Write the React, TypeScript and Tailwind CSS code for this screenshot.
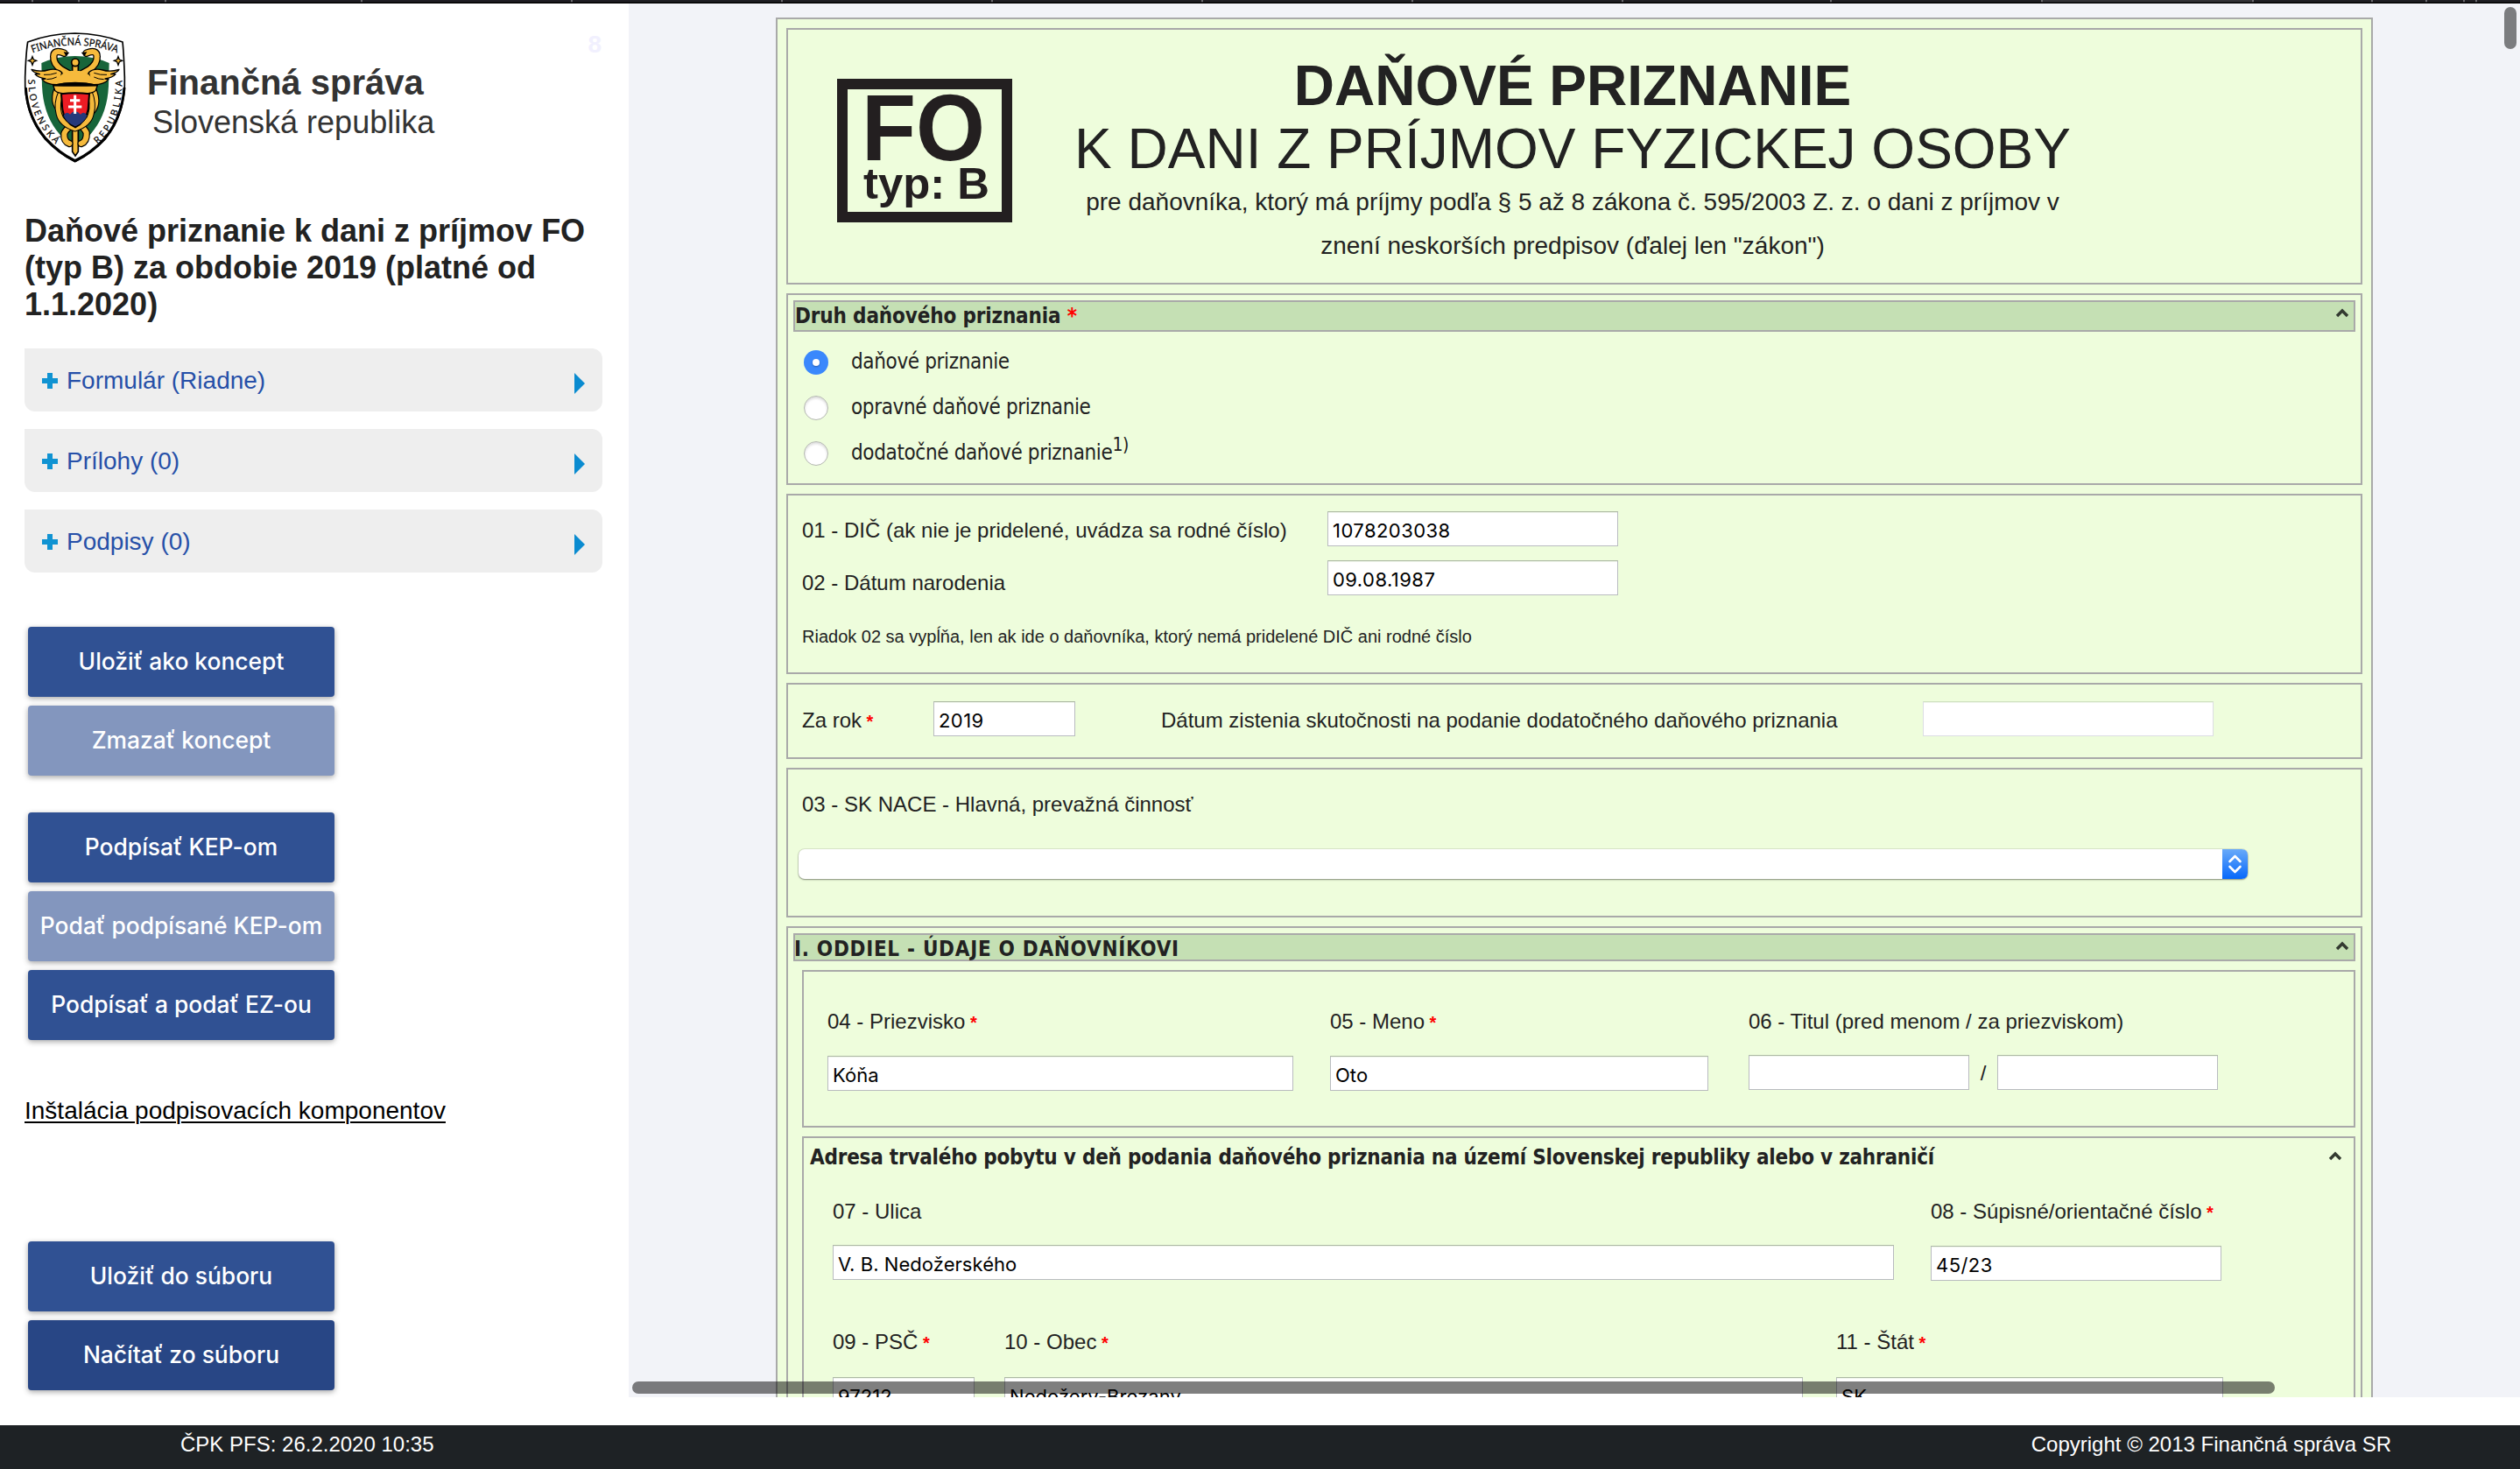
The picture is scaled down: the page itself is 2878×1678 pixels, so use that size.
import React from 'react';

const ticks = [37, 90, 189, 413, 653, 893, 1133, 1373, 1613, 1853, 2091, 2332, 2573, 2709, 2771, 2814, 2828];

function TopStrip() {
  return (
    <svg className="block h-1 w-full shrink-0" viewBox="0 0 2878 4" preserveAspectRatio="none">
      <rect width="2878" height="4" fill="#1f1e23" />
      <rect x="2332" width="241" height="4" fill="#333237" />
      {ticks.map((x) => (
        <rect key={x} x={x - 1} width="2" height="2.5" fill="#6a696e" />
      ))}
      <rect y="2.5" width="2878" height="1.5" fill="#000" />
    </svg>
  );
}

function Shield() {
  const gold = '#f6ba3c';
  return (
    <svg className="h-[165px] w-[130px] shrink-0" viewBox="0 0 390 495" fill="none">
      <path
        d="M35 54Q110 25 197 24Q285 25 360 54Q364 90 367 175Q371 300 302 385Q255 436 197 464Q140 436 93 385Q22 300 26 175Q29 90 35 54Z"
        fill="#fff"
        stroke="#000"
        strokeWidth="5"
      />
      <path d="M28 210Q34 310 95 383Q142 434 197 461Q253 434 300 383Q359 310 366 210" stroke="#000" strokeWidth="9" />
      <path
        d="M82 126Q137 102 197 102Q258 102 314 126L312 205Q308 295 262 355Q235 395 197 408Q160 395 132 355Q88 295 84 205Z"
        fill="#17653a"
      />
      <path id="arcTop" d="M52 92Q190 38 344 92" />
      <path id="arcLeft" d="M37 182C38 285 72 348 140 414" />
      <path id="arcRight" d="M274 404C330 356 362 280 358 172" />
      <g fill="#000" stroke="#000" strokeWidth="0.6" fontFamily="Noto Sans, sans-serif">
        <text fontSize="36" textLength="296" lengthAdjust="spacingAndGlyphs">
          <textPath href="#arcTop">FINANČNÁ SPRÁVA</textPath>
        </text>
        <text fontSize="32" textLength="248" lengthAdjust="spacing">
          <textPath href="#arcLeft">SLOVENSKÁ</textPath>
        </text>
        <text fontSize="32" textLength="242" lengthAdjust="spacing">
          <textPath href="#arcRight">REPUBLIKA</textPath>
        </text>
      </g>
      <path d="M51 104l4 10 10 4-10 4-4 11-4-11-10-4 10-4zM345 104l4 10 10 4-10 4-4 11-4-11-10-4 10-4z" fill={gold} stroke="#000" strokeWidth="4" />
      {/* staff */}
      <path d="M188 130h20v300l-10 14-10-14z" fill={gold} stroke="#000" strokeWidth="5" />
      {/* lower coils */}
      <g strokeLinecap="round">
        <path d="M136 215Q116 270 160 295Q230 345 236 365Q238 395 218 402" stroke="#000" strokeWidth="25" />
        <path d="M136 215Q116 270 160 295Q230 345 236 365Q238 395 218 402" stroke={gold} strokeWidth="18" />
        <path d="M258 215Q282 270 246 300Q166 345 160 368Q158 395 178 402" stroke="#000" strokeWidth="25" />
        <path d="M258 215Q282 270 246 300Q166 345 160 368Q158 395 178 402" stroke={gold} strokeWidth="18" />
        <path d="M150 225Q132 265 142 300Q150 335 197 350Q245 335 252 300Q262 265 246 225" stroke="#000" strokeWidth="22" />
        <path d="M150 225Q132 265 142 300Q150 335 197 350Q245 335 252 300Q262 265 246 225" stroke={gold} strokeWidth="16" />
        {/* snake necks */}
        <path d="M160 92Q124 78 124 104Q122 128 150 148L186 168" stroke="#000" strokeWidth="26" />
        <path d="M160 92Q124 78 124 104Q122 128 150 148L186 168" stroke={gold} strokeWidth="18" />
        <path d="M236 92Q272 78 272 104Q274 128 246 148L210 168" stroke="#000" strokeWidth="26" />
        <path d="M236 92Q272 78 272 104Q274 128 246 148L210 168" stroke={gold} strokeWidth="18" />
      </g>
      <path d="M158 88l20 2-12 12zM238 88l-20 2 12 12z" fill="#000" />
      {/* wings */}
      <path
        d="M142 200Q100 202 84 182L96 180Q70 176 60 164L76 164Q52 158 48 148Q80 158 104 150Q134 142 152 158ZM254 200Q296 202 312 182L300 180Q326 176 336 164L320 164Q344 158 348 148Q316 158 292 150Q262 142 244 158Z"
        fill={gold}
        stroke="#000"
        strokeWidth="4"
        strokeLinejoin="round"
      />
      <path d="M90 166Q112 168 134 160M100 182Q118 182 134 174M306 166Q284 168 262 160M296 182Q278 182 262 174" stroke="#000" strokeWidth="3" />
      {/* helmet */}
      <circle cx="198" cy="124" r="13" fill={gold} stroke="#000" strokeWidth="5" />
      <path d="M134 205Q136 152 197 152Q258 152 262 205Z" fill={gold} />
      <path d="M122 202Q197 184 274 202L268 220Q255 234 197 230Q140 234 128 220Z" fill={gold} stroke="#000" strokeWidth="4" />
      <path d="M122 203Q197 186 274 203Q197 204 122 203Z" fill="#000" stroke="#000" strokeWidth="5" />
      <path d="M150 232Q197 226 246 232L242 285Q234 328 198 346Q160 328 154 285Z" fill="#ed1c24" stroke="#000" strokeWidth="6" />
      <path d="M158 306Q168 288 180 302Q197 282 216 302Q228 288 238 306Q228 332 198 343Q168 332 158 306Z" fill="#26397b" />
      <path d="M197 236v64M180 254h34M174 276h46" stroke="#fff" strokeWidth="9" />
    </svg>
  );
}

function MenuItem({ label }: { label: string }) {
  return (
    <div className="flex h-[72px] w-[660px] items-center rounded-xl rounded-tl-none bg-[#eeeeee] px-5">
      <svg className="mt-[2px] h-[18px] w-[18px]" viewBox="0 0 18 18">
        <path d="M6 0h6v6h6v6h-6v6h-6v-6h-6v-6h6z" fill="#1093d2" />
      </svg>
      <span className="mt-px ml-[10px] text-[28px] text-[#2650a8]">{label}</span>
      <svg className="mt-2 ml-auto h-6 w-3" viewBox="0 0 12 24">
        <path d="M0 0L12 12L0 24z" fill="#0a8bd0" />
      </svg>
    </div>
  );
}

function ActionButton({ label, tone = 'bg-[#305193]' }: { label: string; tone?: string }) {
  return (
    <button
      className={`${tone} flex h-20 w-[350px] items-center justify-center rounded-[4px] font-[Inter,sans-serif] text-[26.4px] font-medium whitespace-nowrap text-white shadow-[0_2px_6px_rgba(0,0,0,0.35)]`}
    >
      {label}
    </button>
  );
}

function Star() {
  return <span className="text-[20px] font-bold text-[#ff0000]"> *</span>;
}

function TextBox({ value = '', width, faint = false, digits = false }: { value?: string; width: string; faint?: boolean; digits?: boolean }) {
  return (
    <div
      className={`${width} ${faint ? 'border-[#dcdde4] border-t-[#cfe0c0]' : 'border-[#b9bbc0] border-t-[#adb9a3]'} ${
        digits ? 'tracking-[0.45px]' : 'tracking-[0.05px]'
      } flex h-10 shrink-0 items-center border bg-white pt-1 pl-[5px] font-[Inter,sans-serif] text-[22px] whitespace-nowrap text-black shadow-[inset_0_1px_0_#f0f5ec]`}
    >
      {value}
    </div>
  );
}

function Field({ label, required = false, gap, children }: { label: string; required?: boolean; gap: string; children: React.ReactNode }) {
  return (
    <div className={`${gap} flex shrink-0 flex-col`}>
      <div className="text-[24px] leading-10 whitespace-pre">
        {label}
        {required && <Star />}
      </div>
      {children}
    </div>
  );
}

function Chevron({ place }: { place: string }) {
  return (
    <svg className={`${place} h-[11px] w-4 shrink-0`} viewBox="0 0 16 11" fill="none">
      <path d="M2 9L8 3L14 9" stroke="#333a30" strokeWidth="3.4" />
    </svg>
  );
}

function Radio({ checked = false, children }: { checked?: boolean; children: React.ReactNode }) {
  return (
    <label className="flex h-[52px] items-center">
      {checked ? (
        <span className="flex size-7 items-center justify-center rounded-full bg-[#3a88fc]">
          <span className="size-2 rounded-full bg-white shadow-[0_1px_2px_rgba(0,0,0,0.3)]" />
        </span>
      ) : (
        <span className="size-7 rounded-full border border-[#b4b8b0] bg-white shadow-[inset_0_2px_3px_rgba(0,0,0,0.15)]" />
      )}
      <span className="-mt-[3px] ml-[26px] font-['DejaVu_Sans_Condensed',sans-serif] text-[24px] leading-7 tracking-[-0.36px]">{children}</span>
    </label>
  );
}

const titleFont = "font-['DejaVu_Sans_Condensed',sans-serif] text-[24px] font-bold whitespace-pre";

export default function App() {
  return (
    <div className="flex h-[1678px] w-[2878px] flex-col overflow-hidden bg-white font-['Liberation_Sans',Arial,sans-serif] text-[#222222]">
      <TopStrip />
      <main className="flex h-[1592px] shrink-0">
        <aside className="flex w-[718px] shrink-0 flex-col bg-white pl-7">
          <header className="mt-[26px] flex">
            <div className="-ml-2">
              <Shield />
            </div>
            <div className="mt-[42px] ml-[18px] text-[#333333]">
              <h1 className="text-[40px] leading-[44px] font-bold">Finančná správa</h1>
              <p className="mt-1 ml-[6px] text-[36px] leading-10">Slovenská republika</p>
            </div>
            <span className="mt-[7px] mr-[31px] ml-auto text-[28px] leading-7 font-bold text-[#f1f0fe]">8</span>
          </header>
          <h2 className="mt-12 text-[36px] leading-[42px] font-bold">
            Daňové priznanie k dani z príjmov FO
            <br />
            (typ B) za obdobie 2019 (platné od
            <br />
            1.1.2020)
          </h2>
          <nav className="mt-[29px] flex flex-col gap-5">
            <MenuItem label="Formulár (Riadne)" />
            <MenuItem label="Prílohy (0)" />
            <MenuItem label="Podpisy (0)" />
          </nav>
          <div className="mt-[62px] ml-1 flex flex-col gap-[10px]">
            <ActionButton label="Uložiť ako koncept" />
            <ActionButton label="Zmazať koncept" tone="bg-[#8396be]" />
          </div>
          <div className="mt-[42px] ml-1 flex flex-col gap-[10px]">
            <ActionButton label="Podpísať KEP-om" />
            <ActionButton label="Podať podpísané KEP-om" tone="bg-[#8396be]" />
            <ActionButton label="Podpísať a podať EZ-ou" />
          </div>
          <a className="mt-[61px] self-start text-[28px] leading-10 text-black underline decoration-[1.5px] underline-offset-[3px]">
            Inštalácia podpisovacích komponentov
          </a>
          <div className="mt-[129px] ml-1 flex flex-col gap-[10px]">
            <ActionButton label="Uložiť do súboru" />
            <ActionButton label="Načítať zo súboru" tone="bg-[#284685]" />
          </div>
        </aside>

        <section className="relative flex-1 overflow-hidden bg-[#f2f3f8] pl-[168px]">
          <div className="mt-4 h-[1700px] w-[1824px] border-2 border-[#a9a9a9] bg-[#eefddc] p-[10px]">
            <div className="flex h-[293px] border-2 border-[#a9a9a9]">
              <svg className="mt-14 ml-14 h-[164px] w-[200px] shrink-0" viewBox="0 0 200 164" fontFamily="'Liberation Sans', Arial, sans-serif" fontWeight="bold">
                <rect x="6" y="6" width="188" height="152" fill="none" stroke="#231f20" strokeWidth="12" />
                <text x="28" y="93" fontSize="107" textLength="141" lengthAdjust="spacingAndGlyphs" fill="#231f20">
                  FO
                </text>
                <text x="30" y="137" fontSize="50.500" textLength="144" lengthAdjust="spacingAndGlyphs" fill="#231f20">
                  typ: B
                </text>
              </svg>
              <div className="mt-7 ml-[13px] w-[1254px] text-center whitespace-nowrap">
                <h1 className="text-[64px] leading-[72px] font-bold">DAŇOVÉ PRIZNANIE</h1>
                <h2 className="text-[64px] leading-[72px]">K DANI Z PRÍJMOV FYZICKEJ OSOBY</h2>
                <p className="text-[28px] leading-[50px]">
                  pre daňovníka, ktorý má príjmy podľa § 5 až 8 zákona č. 595/2003 Z. z. o dani z príjmov v
                  <br />
                  znení neskorších predpisov (ďalej len "zákon")
                </p>
              </div>
            </div>

            <div className="mt-[10px] h-[219px] border-2 border-[#a9a9a9] p-[6px]">
              <div className="flex h-9 items-center border-2 border-[#a9a9a9] bg-[#c5e0b4]">
                <span className={`${titleFont} tracking-[-0.15px]`}>
                  Druh daňového priznania <span className="text-[#ff0000]">*</span>
                </span>
                <Chevron place="mr-[5px] -mt-[7px] ml-auto" />
              </div>
              <div className="mt-[9px] pl-3">
                <Radio checked>daňové priznanie</Radio>
                <Radio>opravné daňové priznanie</Radio>
                <Radio>
                  dodatočné daňové priznanie
                  <sup className="-top-[10px] text-[21px] leading-none">1)</sup>
                </Radio>
              </div>
            </div>

            <div className="mt-[10px] h-[206px] border-2 border-[#a9a9a9] pt-[18px] pl-4">
              <div className="flex items-center">
                <span className="mt-1 w-[600px] text-[24px]">01 - DIČ (ak nie je pridelené, uvádza sa rodné číslo)</span>
                <TextBox width="w-[332px]" value="1078203038" digits />
              </div>
              <div className="mt-4 flex h-10 items-center">
                <span className="mt-3 w-[600px] text-[24px]">02 - Dátum narodenia</span>
                <TextBox width="w-[332px]" value="09.08.1987" digits />
              </div>
              <p className="mt-8 text-[20px] leading-[30px]">Riadok 02 sa vypĺňa, len ak ide o daňovníka, ktorý nemá pridelené DIČ ani rodné číslo</p>
            </div>

            <div className="mt-[10px] flex h-[87px] items-start border-2 border-[#a9a9a9] pt-[19px] pl-4">
              <span className="mt-[2px] w-[150px] text-[24px] leading-10 whitespace-pre">
                Za rok
                <Star />
              </span>
              <TextBox width="w-[162px]" value="2019" digits />
              <span className="mt-[2px] ml-[98px] w-[870px] text-[24px] leading-10">Dátum zistenia skutočnosti na podanie dodatočného daňového priznania</span>
              <TextBox width="w-[332px]" faint />
            </div>

            <div className="mt-[10px] h-[171px] border-2 border-[#a9a9a9] pt-5 pl-4">
              <p className="text-[24px] leading-10">03 - SK NACE - Hlavná, prevažná činnosť</p>
              <div className="mt-[31px] -ml-1 flex h-[34px] w-[1655px] justify-end rounded-[7px] bg-white shadow-[0_0_0_1px_rgba(0,0,0,0.08),0_1px_2px_rgba(0,0,0,0.4)]">
                <svg className="h-[34px] w-[29px]" viewBox="0 0 29 34" fill="none">
                  <defs>
                    <linearGradient id="blue" x1="0" y1="0" x2="0" y2="1">
                      <stop offset="0" stopColor="#69aaf9" />
                      <stop offset="1" stopColor="#0668fb" />
                    </linearGradient>
                  </defs>
                  <path d="M0 0H22Q29 0 29 7V27Q29 34 22 34H0Z" fill="url(#blue)" />
                  <path d="M8.500 14L14.500 8L20.500 14M8.500 20L14.500 26L20.500 20" stroke="#fff" strokeWidth="2.600" strokeLinecap="round" strokeLinejoin="round" />
                </svg>
              </div>
            </div>

            <div className="mt-[10px] h-[900px] border-2 border-[#a9a9a9] p-[6px]">
              <div className="flex h-8 items-center border-2 border-[#a9a9a9] bg-[#c5e0b4]">
                <span className={`${titleFont} mt-1 -ml-px tracking-[0.7px]`}>I. ODDIEL - ÚDAJE O DAŇOVNÍKOVI</span>
                <Chevron place="mr-[5px] -mt-[3px] ml-auto" />
              </div>

              <div className="mt-[10px] ml-[10px] flex h-[180px] border-2 border-[#a9a9a9] pt-[37px] pl-[27px]">
                <Field label="04 - Priezvisko" required gap="gap-[18px]">
                  <TextBox width="w-[532px]" value="Kóňa" />
                </Field>
                <div className="w-[42px]" />
                <Field label="05 - Meno" required gap="gap-[18px]">
                  <TextBox width="w-[432px]" value="Oto" />
                </Field>
                <div className="w-[46px]" />
                <Field label="06 - Titul (pred menom / za priezviskom)" gap="gap-[18px]">
                  <div className="flex">
                    <TextBox width="w-[252px]" />
                    <span className="w-8 text-center text-[24px] leading-[42px]">/</span>
                    <TextBox width="w-[252px]" />
                  </div>
                </Field>
              </div>

              <div className="mt-[10px] ml-[10px] h-[600px] border-2 border-[#a9a9a9] pt-1">
                <div className="flex h-9 items-center">
                  <span className={`${titleFont} ml-[7px] tracking-[-0.22px]`}>
                    Adresa trvalého pobytu v deň podania daňového priznania na území Slovenskej republiky alebo v zahraničí
                  </span>
                  <Chevron place="mr-[13px] -mt-1 ml-auto" />
                </div>
                <div className="mt-6 flex gap-[42px] pl-[33px]">
                  <Field label="07 - Ulica" gap="gap-[18px]">
                    <TextBox width="w-[1212px]" value="V. B. Nedožerského" />
                  </Field>
                  <Field label="08 - Súpisné/orientačné číslo" required gap="gap-[18px]">
                    <TextBox width="w-[332px]" value="45/23" digits />
                  </Field>
                </div>
                <div className="mt-[50px] flex pl-[33px]">
                  <Field label="09 - PSČ" required gap="gap-[19px]">
                    <TextBox width="w-[162px]" value="97212" />
                  </Field>
                  <div className="w-[34px]" />
                  <Field label="10 - Obec" required gap="gap-[19px]">
                    <TextBox width="w-[912px]" value="Nedožery-Brezany" />
                  </Field>
                  <div className="w-[38px]" />
                  <Field label="11 - Štát" required gap="gap-[19px]">
                    <TextBox width="w-[442px]" value="SK" />
                  </Field>
                </div>
              </div>
            </div>
          </div>
          <div className="absolute top-1 left-[2142px] h-12 w-[14px] rounded-full bg-[#7b7c7f]" />
          <div className="absolute top-[1574px] left-1 h-[14px] w-[1876px] rounded-full bg-black/50" />
        </section>
      </main>
      <footer className="mt-8 flex h-[50px] justify-between bg-[#1e2225] pr-[147px] pl-[206px] text-[24px] leading-[43px] text-white">
        <span>ČPK PFS: 26.2.2020 10:35</span>
        <span>Copyright © 2013 Finančná správa SR</span>
      </footer>
    </div>
  );
}
